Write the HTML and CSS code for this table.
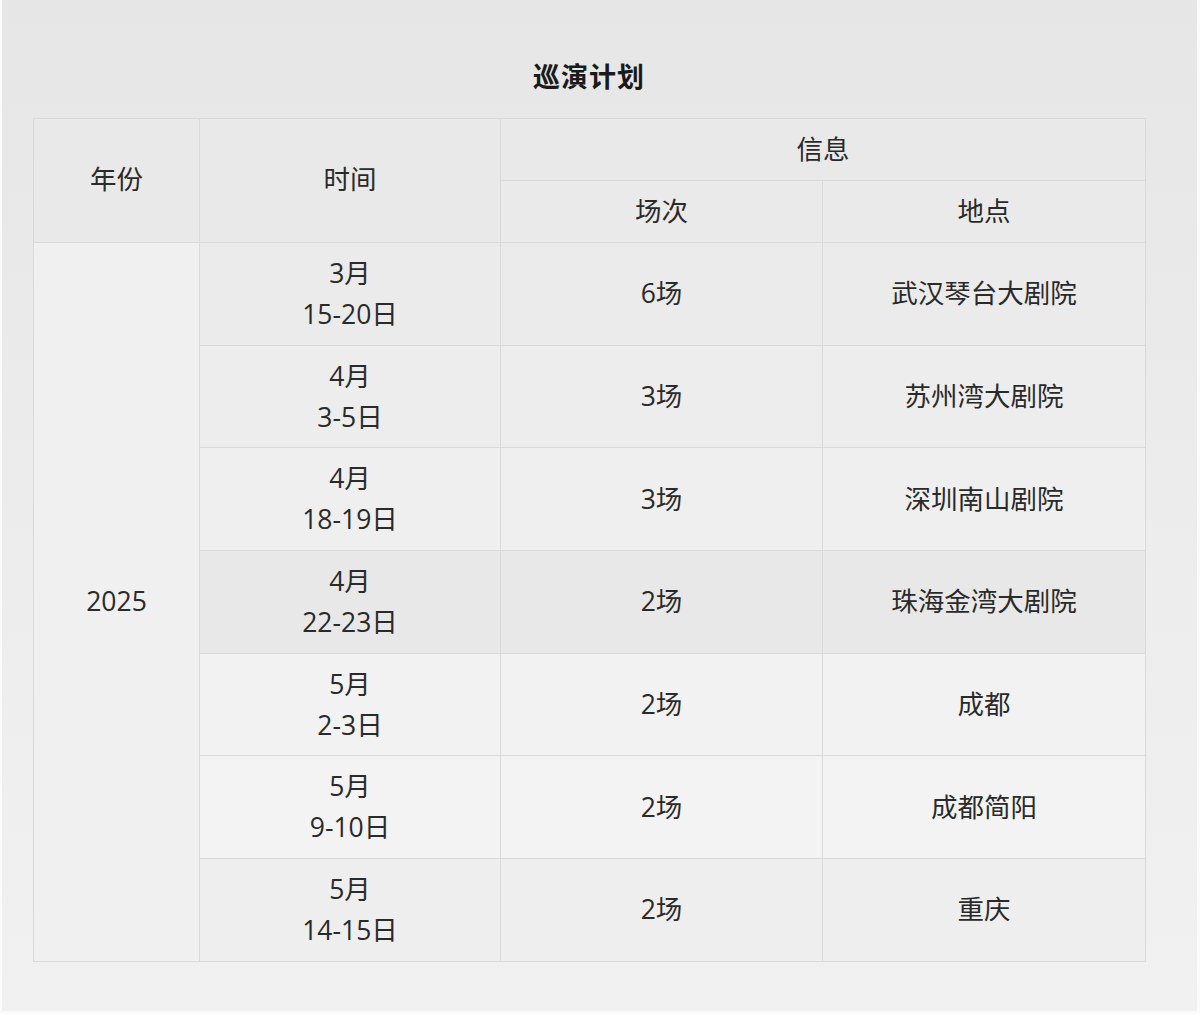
FILE: index.html
```html
<!DOCTYPE html>
<html lang="zh-CN">
<head>
<meta charset="utf-8">
<title>巡演计划</title>
<link rel="stylesheet" href="styles.css">
</head>
<body>
<div class="frame">
  <div class="container">
    <h1 class="title">巡演计划</h1>
    <table class="plan">
      <colgroup>
        <col class="c-year"><col class="c-time"><col class="c-count"><col class="c-place">
      </colgroup>
      <thead>
        <tr class="h1">
          <th rowspan="2">年份</th>
          <th rowspan="2">时间</th>
          <th colspan="2">信息</th>
        </tr>
        <tr class="h2">
          <th>场次</th>
          <th>地点</th>
        </tr>
      </thead>
      <tbody>
        <tr class="r1">
          <td class="year" rowspan="7">2025</td>
          <td>3月<br>15-20日</td><td>6场</td><td>武汉琴台大剧院</td>
        </tr>
        <tr class="r2"><td>4月<br>3-5日</td><td>3场</td><td>苏州湾大剧院</td></tr>
        <tr class="r3"><td>4月<br>18-19日</td><td>3场</td><td>深圳南山剧院</td></tr>
        <tr class="r4"><td>4月<br>22-23日</td><td>2场</td><td>珠海金湾大剧院</td></tr>
        <tr class="r5"><td>5月<br>2-3日</td><td>2场</td><td>成都</td></tr>
        <tr class="r6"><td>5月<br>9-10日</td><td>2场</td><td>成都简阳</td></tr>
        <tr class="r7"><td>5月<br>14-15日</td><td>2场</td><td>重庆</td></tr>
      </tbody>
    </table>
  </div>
</div>
</body>
</html>
```
FILE: styles.css
```css
html, body {
  margin: 0;
  padding: 0;
  height: 100%;
}
body {
  background: #fbfbfb;
  font-family: "Open Sans", "Noto Sans CJK SC", sans-serif;
  color: #2a2a2a;
}
.frame {
  box-sizing: border-box;
  height: 1014px;
  margin: 0 3px 0 2px;
  padding-top: 2px;
  background: linear-gradient(180deg, #e6e6e6 0%, #ececec 50%, #f1f1f1 100%);
  border-bottom: 3px solid #fafafa;
}
.container {
  width: 1112px;
  margin-left: 31px;
  padding-top: 54px;
}
.title {
  margin: 0 0 22px;
  text-align: center;
  font-family: "Noto Sans CJK SC", sans-serif;
  font-size: 27px;
  line-height: 40px;
  font-weight: 700;
  color: #1a1a1a;
  letter-spacing: 1px;
}
.plan {
  width: 1112px;
  border-collapse: collapse;
  table-layout: fixed;
  font-size: 26.5px;
  line-height: 41px;
}
.c-year { width: 166px; }
.c-time { width: 301px; }
.c-count { width: 322px; }
.c-place { width: 323px; }
.plan th, .plan td {
  border: 1px solid #dadada;
  text-align: center;
  vertical-align: middle;
  padding: 0;
  font-weight: 400;
}
.plan th {
  background: #e9e9e9;
  color: #2a2a2a;
}
.plan .h1 th { height: 61px; }
.plan .h1 th[rowspan] { padding-bottom: 3px; }
.plan .h2 th { height: 61px; background: #eaeaea; }
.plan tbody tr td { height: 101.7px; }
.plan td.year { background: #f0f0f0; }
.r1 td { background: #ebebeb; }
.r2 td { background: #ededed; }
.r3 td { background: #efefef; }
.r4 td { background: #e8e8e8; }
.r5 td { background: #f2f2f2; }
.r6 td { background: #f3f3f3; }
.r7 td { background: #eeeeee; }
```
